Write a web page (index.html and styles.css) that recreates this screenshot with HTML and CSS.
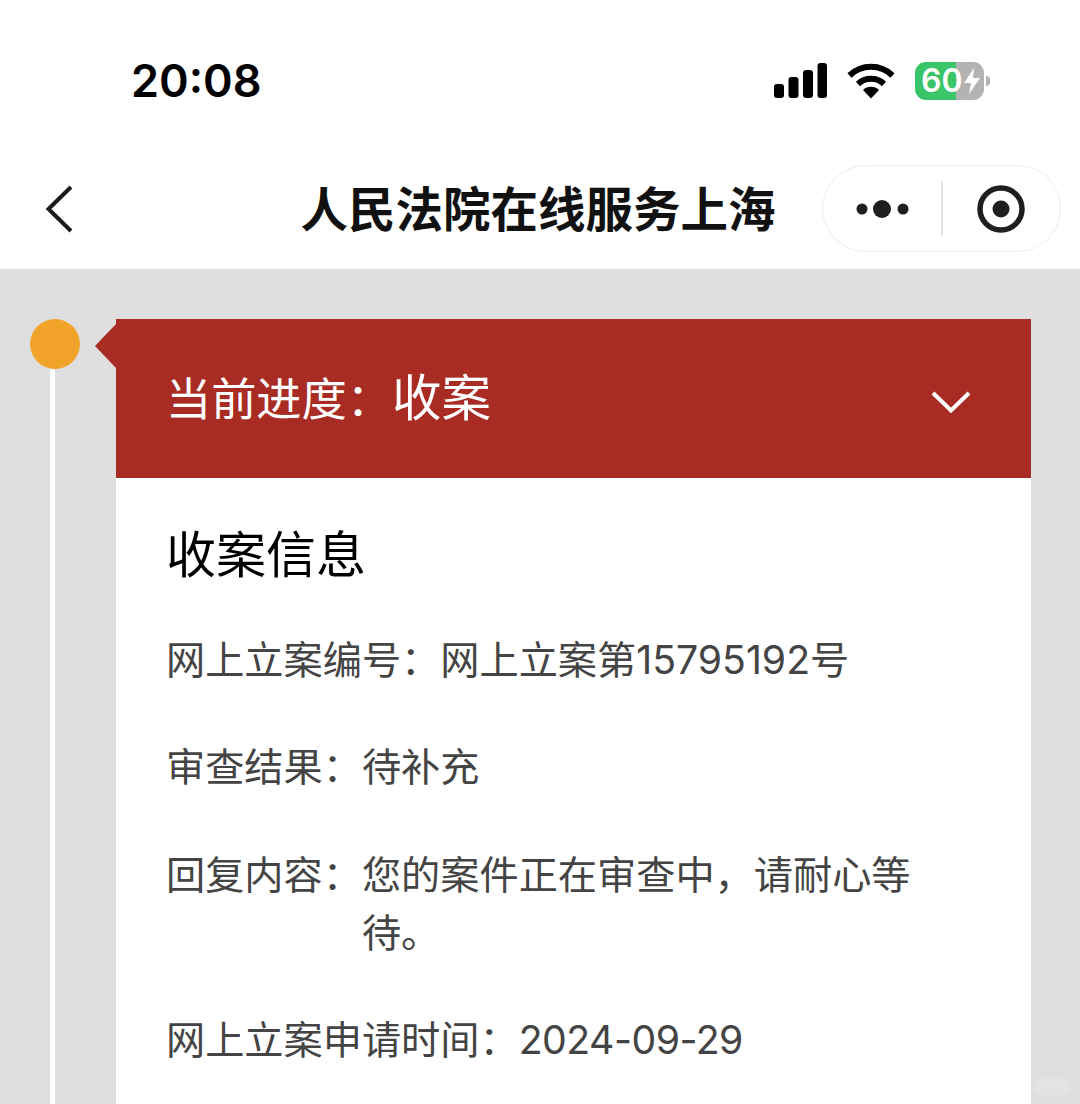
FILE: index.html
```html
<!DOCTYPE html>
<html lang="zh-CN">
<head>
    <meta charset="UTF-8">
    <meta name="viewport" content="width=device-width, initial-scale=1.0">
    <title>人民法院在线服务上海</title>
    <link rel="stylesheet" href="styles.css">
</head>
<body>
    <div class="status-bar">
        <span class="time">20:08</span>
        <div class="status-icons">
            <svg class="signal" width="54" height="36" viewBox="0 0 54 36">
                <rect x="1" y="21" width="10" height="14" rx="3"/>
                <rect x="15.500" y="14" width="10" height="21" rx="3"/>
                <rect x="30" y="7" width="10" height="28" rx="3"/>
                <rect x="44.500" y="0" width="9.500" height="35" rx="3"/>
            </svg>
            <svg class="wifi" width="48" height="36" viewBox="0 0 48 36">
                <path d="M2.500 12.500 A31 31 0 0 1 45.500 12.500" fill="none" stroke="#000" stroke-width="6"/>
                <path d="M11 21 A19 19 0 0 1 37 21" fill="none" stroke="#000" stroke-width="6"/>
                <path d="M16 27 A11.500 11.500 0 0 1 32 27 L24 35.500 Z"/>
            </svg>
            <div class="battery">
                <div class="battery-body">
                    <span class="battery-num">60</span>
                    <svg class="bolt" width="18" height="26" viewBox="0 0 18 26">
                        <path d="M11 0 L1 15 H8 L6 26 L17 10 H10 Z" fill="#fff"/>
                    </svg>
                </div>
                <div class="battery-nub"></div>
            </div>
        </div>
    </div>

    <div class="nav-bar">
        <svg class="back" width="30" height="50" viewBox="0 0 30 50">
            <path d="M26 3 L3.500 25 L26 47" fill="none" stroke="#1a1a1a" stroke-width="4"/>
        </svg>
        <h1 class="nav-title">人民法院在线服务上海</h1>
        <div class="capsule">
            <svg class="more" width="54" height="20" viewBox="0 0 54 20">
                <circle cx="6" cy="10" r="5.500" fill="#1f1f1f"/>
                <circle cx="26" cy="10" r="9" fill="#1f1f1f"/>
                <circle cx="47" cy="10" r="5.500" fill="#1f1f1f"/>
            </svg>
            <div class="capsule-line"></div>
            <svg class="target" width="48" height="48" viewBox="0 0 48 48">
                <circle cx="24" cy="24" r="21" fill="none" stroke="#1f1f1f" stroke-width="5.500"/>
                <circle cx="24" cy="24" r="8.500" fill="#1f1f1f"/>
            </svg>
        </div>
    </div>

    <div class="content">
        <div class="rail">
            <div class="dot"></div>
            <div class="rail-line"></div>
        </div>
        <div class="card">
            <div class="card-head">
                <div class="progress"><span class="progress-label">当前进度：</span><span class="progress-value">收案</span></div>
                <svg class="toggle" width="40" height="22" viewBox="0 0 40 22">
                    <path d="M2 2 L20 19.500 L38 2" fill="none" stroke="#fff" stroke-width="4"/>
                </svg>
            </div>
            <div class="card-body">
                <h2 class="section-title">收案信息</h2>
                <div class="row">
                    <span class="row-label">网上立案编号：</span>
                    <span class="row-value">网上立案第15795192号</span>
                </div>
                <div class="row">
                    <span class="row-label">审查结果：</span>
                    <span class="row-value">待补充</span>
                </div>
                <div class="row">
                    <span class="row-label">回复内容：</span>
                    <span class="row-value">您的案件正在审查中，请耐心等待。</span>
                </div>
                <div class="row">
                    <span class="row-label">网上立案申请时间：</span>
                    <span class="row-value row-date">2024-09-29</span>
                </div>
            </div>
        </div>
    </div>

    <div class="watermark"></div>
</body>
</html>
```

FILE: styles.css
```css
* {
    box-sizing: border-box;
}

html, body {
    margin: 0;
    padding: 0;
}

body {
    position: relative;
    width: 1080px;
    height: 1104px;
    overflow: hidden;
    background: #dfdfdf;
    font-family: "Noto Sans CJK SC", "Noto Sans", sans-serif;
    display: flex;
    flex-direction: column;
}

.status-bar {
    height: 160px;
    flex-shrink: 0;
    background: #fff;
    padding: 0 90px 0 131px;
    display: flex;
    justify-content: space-between;
    align-items: flex-start;
}

.time {
    margin-top: 53px;
    font-family: Inter, sans-serif;
    font-size: 45px;
    line-height: 56px;
    font-weight: 600;
    color: #000;
}

.status-icons {
    margin-top: 62px;
    display: flex;
    align-items: center;
    gap: 20px;
}

.wifi {
    margin-left: 1px;
}

.signal {
    margin-right: -1px;
}

.battery {
    display: flex;
    align-items: center;
}

.battery-body {
    width: 69px;
    height: 38px;
    border-radius: 11px;
    background: linear-gradient(to right, #3ac569 0, #3ac569 41px, #b3b3b3 41px);
    display: flex;
    align-items: center;
    padding-left: 6px;
    color: #fff;
}

.battery-num {
    font-family: Inter, sans-serif;
    font-size: 32px;
    line-height: 38px;
    font-weight: 600;
}

.battery-nub {
    width: 4px;
    height: 10px;
    margin-left: 2px;
    border-radius: 0 4px 4px 0;
    background: #b3b3b3;
}

.nav-bar {
    height: 109px;
    flex-shrink: 0;
    background: #fff;
    position: relative;
    display: flex;
    align-items: flex-start;
    justify-content: center;
}

.back {
    position: absolute;
    left: 45px;
    top: 24px;
}

.nav-title {
    margin: 14px 4px 0 0;
    font-size: 47.500px;
    line-height: 66px;
    font-weight: 700;
    color: #111;
}

.capsule {
    position: absolute;
    left: 822px;
    top: 5px;
    width: 239px;
    height: 87px;
    border: 1px solid #eeeeee;
    border-radius: 44px;
    background: #fff;
    display: flex;
    align-items: center;
    padding-left: 33px;
}

.capsule-line {
    width: 2px;
    height: 55px;
    margin-left: 31px;
    background: #e5e5e5;
}

.target {
    margin-left: 34px;
}

.content {
    flex: 1;
    min-height: 0;
    overflow: hidden;
    display: flex;
    padding-top: 50px;
}

.rail {
    width: 116px;
    flex-shrink: 0;
    padding-left: 30px;
    display: flex;
    flex-direction: column;
}

.dot {
    width: 50px;
    height: 50px;
    flex-shrink: 0;
    border-radius: 50%;
    background: #f2a42a;
}

.rail-line {
    width: 5px;
    flex: 1;
    margin-left: 20px;
    background: #fff;
}

.card {
    width: 915px;
    position: relative;
    background: #fff;
}

.card::before {
    content: "";
    position: absolute;
    left: -21px;
    top: 5px;
    border-style: solid;
    border-width: 22px 21px 22px 0;
    border-color: transparent #a82b24 transparent transparent;
}

.card-head {
    height: 159px;
    background: #a82b24;
    color: #fff;
    padding: 0 60px 0 50px;
    display: flex;
    align-items: center;
    justify-content: space-between;
}

.progress {
    display: flex;
    align-items: baseline;
    margin-bottom: 8px;
    font-weight: 400;
}

.progress-label {
    font-size: 45.200px;
}

.progress-value {
    font-size: 49.500px;
}

.toggle {
    margin-top: 6px;
}

.card-body {
    padding: 38px 120px 0 50px;
    color: #444;
}

.section-title {
    margin: 0 0 45px;
    font-size: 50px;
    line-height: 70px;
    font-weight: 400;
    color: #000;
}

.row {
    display: flex;
    margin-bottom: 49.300px;
    font-family: Inter, "Noto Sans CJK SC", sans-serif;
    font-size: 39.200px;
    line-height: 58px;
    font-weight: 400;
}

.row-label {
    white-space: nowrap;
    flex-shrink: 0;
}

.row-date {
    letter-spacing: -0.500px;
}

.watermark {
    position: absolute;
    right: 10px;
    bottom: 9px;
    width: 36px;
    height: 17px;
    border-radius: 8px;
    background: #e3e3e3;
}
```
